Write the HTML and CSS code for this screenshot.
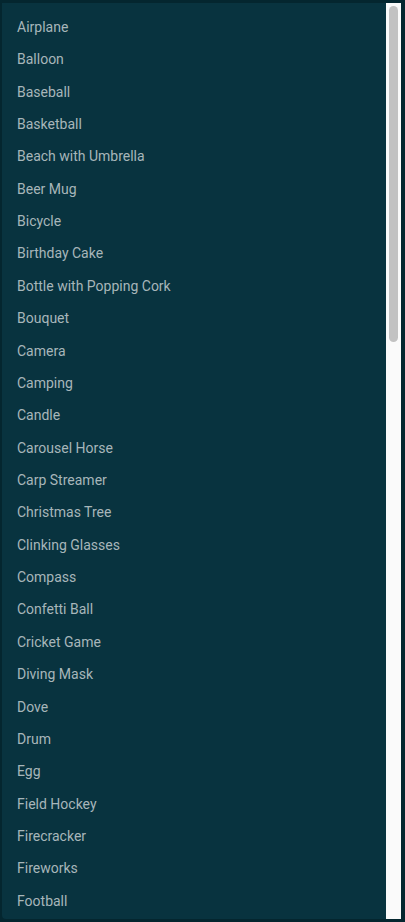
FILE: index.html
```html
<!DOCTYPE html>
<html>
<head>
<meta charset="utf-8">
<link rel="stylesheet" href="styles.css">
</head>
<body>
<div class="panel">
  <ul class="list">
    <li>Airplane</li>
    <li>Balloon</li>
    <li>Baseball</li>
    <li>Basketball</li>
    <li>Beach with Umbrella</li>
    <li>Beer Mug</li>
    <li>Bicycle</li>
    <li>Birthday Cake</li>
    <li>Bottle with Popping Cork</li>
    <li>Bouquet</li>
    <li>Camera</li>
    <li>Camping</li>
    <li>Candle</li>
    <li>Carousel Horse</li>
    <li>Carp Streamer</li>
    <li>Christmas Tree</li>
    <li>Clinking Glasses</li>
    <li>Compass</li>
    <li>Confetti Ball</li>
    <li>Cricket Game</li>
    <li>Diving Mask</li>
    <li>Dove</li>
    <li>Drum</li>
    <li>Egg</li>
    <li>Field Hockey</li>
    <li>Firecracker</li>
    <li>Fireworks</li>
    <li>Football</li>
  </ul>
  <div class="scrollbar"><div class="thumb"></div></div>
</div>
</body>
</html>
```

FILE: styles.css
```css
html, body {
  margin: 0;
  padding: 0;
  background: #04262f;
  height: 922px;
  overflow: hidden;
}
body {
  padding: 3px 4px 3px 2px;
  box-sizing: border-box;
  font-family: Roboto, "Liberation Sans", sans-serif;
}
.panel {
  height: 916px;
  background: #08333f;
  border-radius: 0 0 0 4px;
  display: flex;
  overflow: hidden;
}
.list {
  list-style: none;
  margin: 0;
  padding: 7.8px 0 0 15px;
  flex: 1;
}
.list li {
  height: 32.37px;
  display: flex;
  align-items: center;
  font-size: 14px;
  color: #a7b6ba;
  white-space: nowrap;
}
.scrollbar {
  width: 15px;
  background: #fafafa;
  padding: 3px 3px 0 3px;
  box-sizing: border-box;
  flex: none;
}
.thumb {
  height: 336px;
  background: #c2c2c2;
  border-radius: 5px 5px 5px 5px;
}
```
